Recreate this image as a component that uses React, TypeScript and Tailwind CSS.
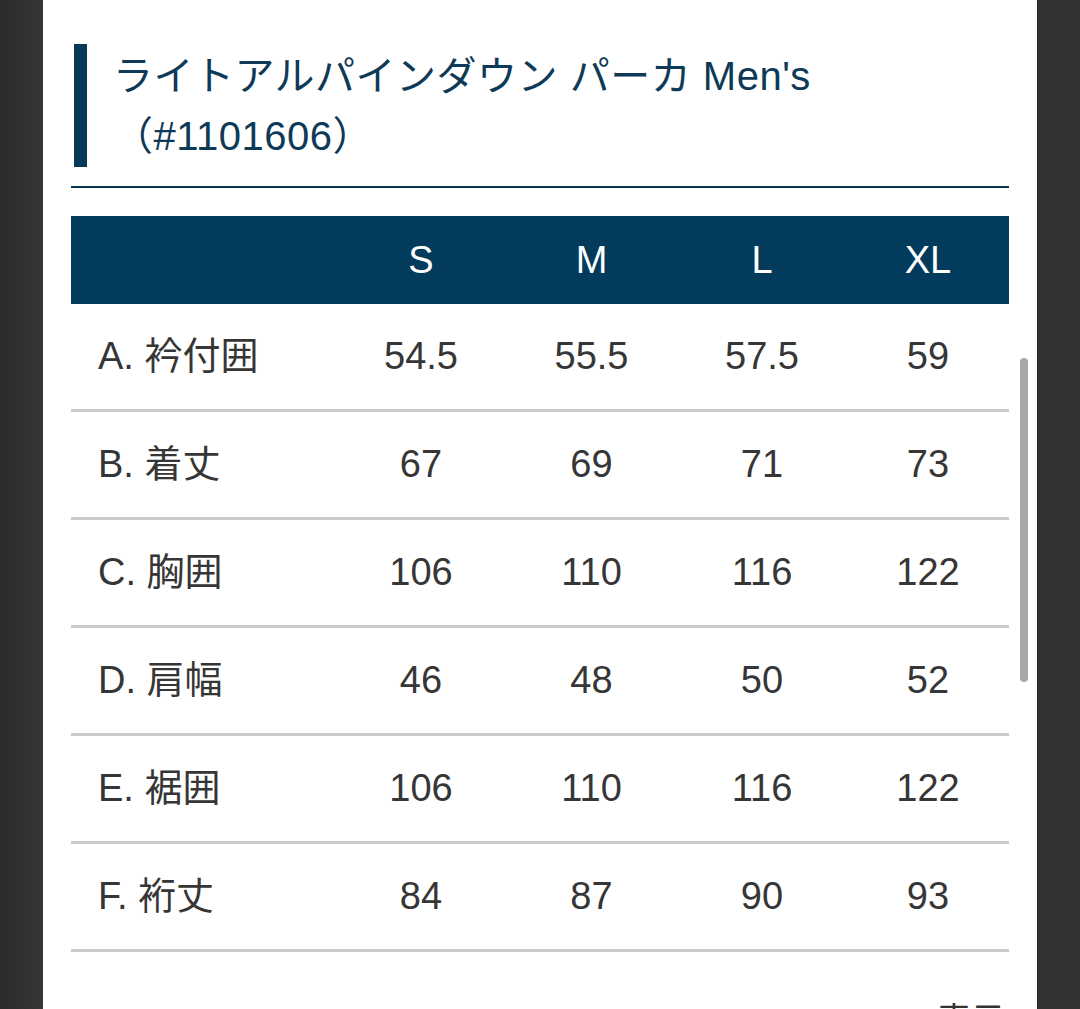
const sizes = ["S", "M", "L", "XL"];

const rows: { label: string; values: string[] }[] = [
  { label: "A. 衿付囲", values: ["54.5", "55.5", "57.5", "59"] },
  { label: "B. 着丈", values: ["67", "69", "71", "73"] },
  { label: "C. 胸囲", values: ["106", "110", "116", "122"] },
  { label: "D. 肩幅", values: ["46", "48", "50", "52"] },
  { label: "E. 裾囲", values: ["106", "110", "116", "122"] },
  { label: "F. 裄丈", values: ["84", "87", "90", "93"] },
];

const cols = "grid grid-cols-[265px_170px_171px_170px_1fr]";

export default function App() {
  return (
    <div
      className="flex h-[1009px] w-[1080px] overflow-hidden bg-[#323232]"
      style={{ fontFamily: '"Liberation Sans", "Noto Sans CJK JP", sans-serif' }}
    >
      <div className="w-[43px] shrink-0 bg-gradient-to-r from-[#2c2c2c] to-[#363636]" />

      <div className="relative w-[994px] shrink-0 bg-white px-[28px] pt-[44px]">
        {/* heading */}
        <div className="ml-[3px] flex">
          <div className="w-[13px] shrink-0 bg-[#063a58]" />
          <h1 className="pt-[2px] pb-[1px] pl-[26px] text-[40px] leading-[60px] font-normal tracking-[0.5px] text-[#0f3a57]">
            <span className="block">ライトアルパインダウン パーカ Men's</span>
            <span className="block">（#1101606）</span>
          </h1>
        </div>
        <div className="mt-[19px] h-[2px] bg-[#0b3550]" />

        {/* table */}
        <div className="mt-[28px]">
          <div className={`${cols} h-[88px] items-center bg-[#023b5c] text-[38px] text-white`}>
            <div />
            {sizes.map((s) => (
              <div key={s} className="text-center">
                {s}
              </div>
            ))}
          </div>
          {rows.map((r) => (
            <div
              key={r.label}
              className={`${cols} h-[108px] items-center border-b-[3px] border-[#cbcbcb] text-[38px] text-[#363636]`}
            >
              <div className="pl-[27px]">{r.label}</div>
              {r.values.map((v, i) => (
                <div key={i} className="text-center">
                  {v}
                </div>
              ))}
            </div>
          ))}
        </div>

        <div className="mt-[43px] pr-[4px] text-right text-[34px] text-[#333333]">表示</div>

        {/* scrollbar */}
        <div className="absolute top-[358px] left-[977px] h-[324px] w-[8px] rounded-full bg-[#a8a8a8]" />
      </div>

      <div className="w-[43px] shrink-0 border-l border-[#262626] bg-[#333333]" />
    </div>
  );
}
